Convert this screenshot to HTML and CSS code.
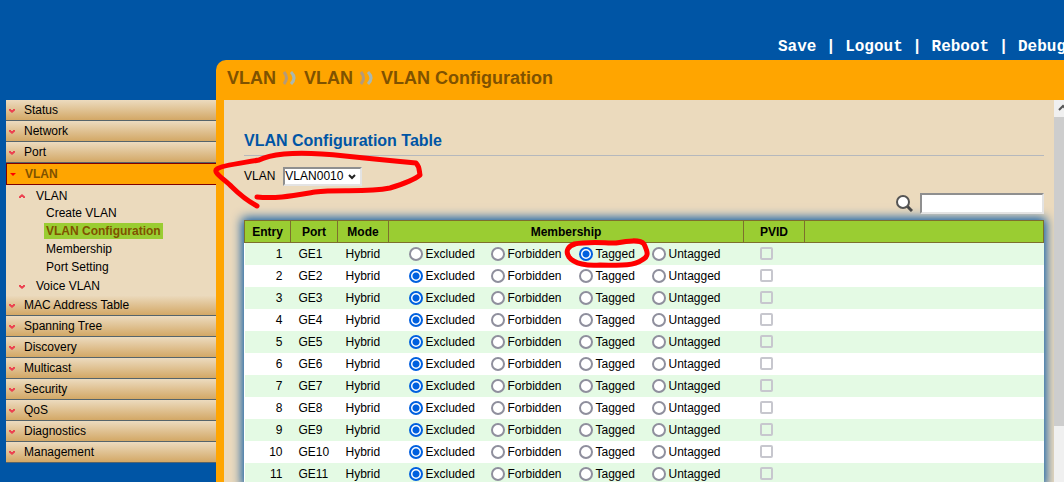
FILE: index.html
```html
<!DOCTYPE html>
<html lang="en">
<head>
    <meta charset="UTF-8">
    <meta name="viewport" content="width=device-width, initial-scale=1.0">
    <title>VLAN Configuration</title>
    <link rel="stylesheet" href="styles.css">
</head>
<body>
    <svg class="defs" aria-hidden="true">
        <symbol id="down" viewBox="0 0 6 5"><path d="M0 1h2v1h2V1h2v1.500L3 5 0 2.500z" fill="#ec4250"/></symbol>
        <symbol id="up" viewBox="0 0 6 5"><path d="M0 4h2V3h2v1h2V2.500L3 0 0 2.500z" fill="#ec4250"/></symbol>
        <symbol id="open" viewBox="0 0 6 5"><path d="M0 1h6L3 4z" fill="#ff0000"/></symbol>
        <symbol id="sep" viewBox="0 0 14 14">
            <path d="M1 1q5 6 0 12" fill="none" stroke="#b59a78" stroke-width="3"/>
            <path d="M8 1q6 6 0 12" fill="none" stroke="#a9b8b0" stroke-width="3"/>
        </symbol>
    </svg>

    <header class="header">
        <nav class="toplinks">
            <a href="#">Save</a> | <a href="#">Logout</a> | <a href="#">Reboot</a> | <a href="#">Debug</a>
        </nav>
    </header>

    <div class="page">
        <nav class="menu">
            <a class="item" href="#"><svg><use href="#down"/></svg>Status</a>
            <a class="item" href="#"><svg><use href="#down"/></svg>Network</a>
            <a class="item" href="#"><svg><use href="#down"/></svg>Port</a>
            <a class="item active" href="#"><svg><use href="#open"/></svg>VLAN</a>
            <div class="submenu">
                <a class="group" href="#"><svg><use href="#up"/></svg>VLAN</a>
                <a class="leaf" href="#">Create VLAN</a>
                <a class="leaf selected" href="#">VLAN Configuration</a>
                <a class="leaf" href="#">Membership</a>
                <a class="leaf" href="#">Port Setting</a>
                <a class="group" href="#"><svg><use href="#down"/></svg>Voice VLAN</a>
            </div>
            <a class="item" href="#"><svg><use href="#down"/></svg>MAC Address Table</a>
            <a class="item" href="#"><svg><use href="#down"/></svg>Spanning Tree</a>
            <a class="item" href="#"><svg><use href="#down"/></svg>Discovery</a>
            <a class="item" href="#"><svg><use href="#down"/></svg>Multicast</a>
            <a class="item" href="#"><svg><use href="#down"/></svg>Security</a>
            <a class="item" href="#"><svg><use href="#down"/></svg>QoS</a>
            <a class="item" href="#"><svg><use href="#down"/></svg>Diagnostics</a>
            <a class="item" href="#"><svg><use href="#down"/></svg>Management</a>
        </nav>

        <main class="main">
            <h1 class="crumbs">
                <span>VLAN</span><svg><use href="#sep"/></svg><span>VLAN</span><svg><use href="#sep"/></svg><span>VLAN Configuration</span>
            </h1>
            <div class="frame">
                <div class="content">
                    <h2 class="title">VLAN Configuration Table</h2>
                    <div class="vlan-row">
                        <label for="vlan">VLAN</label>
                        <div class="select">
                            <select id="vlan">
                                <option>VLAN0010</option>
                            </select>
                            <svg viewBox="0 0 8 6"><path d="M1 1l3 3 3-3" fill="none" stroke="#222" stroke-width="2"/></svg>
                        </div>
                    </div>
                    <div class="search-row">
                        <label for="search" aria-label="Search">
                            <svg viewBox="0 0 17 17">
                                <path d="M11 11l5 5" stroke="#484848" stroke-width="3"/>
                                <circle cx="7" cy="7" r="6" fill="#fff" stroke="#555" stroke-width="2"/>
                            </svg>
                        </label>
                        <input type="text" id="search">
                    </div>
                    <table class="ports">
                        <colgroup>
                            <col class="c-entry"><col class="c-port"><col class="c-mode"><col class="c-member"><col class="c-pvid"><col>
                        </colgroup>
                        <thead>
                            <tr><th>Entry</th><th>Port</th><th>Mode</th><th>Membership</th><th>PVID</th><th></th></tr>
                        </thead>
                        <tbody id="rows"></tbody>
                    </table>
                </div>
                <div class="scrollbar">
                    <div class="arrow"><svg viewBox="0 0 10 8"><path d="M1 6l4-4 4 4" fill="none" stroke="#555" stroke-width="2"/></svg></div>
                    <div class="thumb"></div>
                </div>
            </div>
        </main>
    </div>

    <!-- red pen marks -->
    <svg class="marks" viewBox="0 0 1064 482" aria-hidden="true">
        <path d="M257 206C246 200 239 194 232 187C224 179 212 172 217 169C222 165 243 163 259 160C267 156 275 155 284 154C305 152 327 154 345 156C373 159 394 161 416 163C420 167 419 171 420 175C414 180 403 184 390 188C365 193 339 189 315 192C291 196 275 199 257 197" />
        <path class="thick" d="M574 244C590 241 603 243 616 243C627 241 640 239 644 244C647 251 650 256 642 260C632 267 616 265 600 265C588 266 574 264 569 257C565 251 568 246 575 244z" />
    </svg>

    <script>
        var choices = ["Excluded", "Forbidden", "Tagged", "Untagged"];
        var rows = "";

        for (var i = 1; i <= 11; i++) {
            // GE1 is the tagged port, all others are excluded
            var current = i == 1 ? "Tagged" : "Excluded";
            var radios = choices.map(function (name) {
                var checked = name == current ? " checked" : "";
                return `<label><input type="radio" name="member${i}"${checked}>${name}</label>`;
            }).join("");
            rows += `<tr>
                <td class="entry">${i}</td><td>GE${i}</td><td>Hybrid</td>
                <td class="member"><div class="choices">${radios}</div></td>
                <td class="pvid"><input type="checkbox" aria-label="PVID GE${i}" disabled></td><td></td>
            </tr>`;
        }
        document.getElementById("rows").innerHTML = rows;
    </script>
</body>
</html>
```
FILE: styles.css
```css
* {
    box-sizing: border-box;
}

body {
    margin: 0;
    height: 100vh;
    display: flex;
    flex-direction: column;
    overflow: hidden;
    background-color: #0055a5;
    font-family: Arial, "Liberation Sans", sans-serif;
    font-size: 12px;
    color: #000;
}

a {
    color: inherit;
    text-decoration: none;
}

.defs {
    position: absolute;
    width: 0;
    height: 0;
}

.header {
    flex: none;
    height: 60px;
    display: flex;
    justify-content: flex-end;
    align-items: flex-end;
    overflow: hidden;
}

.toplinks {
    margin-right: -2px;
    padding-bottom: 3px;
    font: bold 16px/20px "Courier New", "Liberation Mono", monospace;
    color: #fff;
    white-space: nowrap;
}

.page {
    flex: 1;
    min-height: 0;
    display: flex;
}

/* left menu */
.menu {
    flex: none;
    width: 210px;
    margin: 40px 0 0 6px;
}

.menu svg {
    width: 6px;
    height: 5px;
}

.item {
    display: flex;
    align-items: center;
    gap: 9px;
    height: 21px;
    padding-left: 3px;
    border-bottom: 1px solid #55646b;
    background: linear-gradient(#ecdbbf, #d3a866);
}

.item.active {
    height: 22px;
    padding-left: 3px;
    border: 1px solid #800000;
    border-right: none;
    background: #ffa500;
    color: #7f5200;
    font-weight: bold;
}

.submenu {
    padding: 2px 0 0 12px;
    background-color: #ebdabd;
}

.group {
    display: flex;
    align-items: center;
    gap: 11px;
    height: 18px;
    padding-left: 1px;
}

.leaf {
    display: block;
    width: fit-content;
    margin: 0 0 2px 26px;
    padding: 0 2px;
    line-height: 16px;
}

.leaf.selected {
    background-color: #9acd32;
    color: #7f5200;
    font-weight: bold;
}

/* right side */
.main {
    flex: 1;
    min-width: 0;
    display: flex;
    flex-direction: column;
    padding-left: 8px;
    border-top-left-radius: 10px;
    background-color: #ffa500;
}

.crumbs {
    flex: none;
    display: flex;
    align-items: center;
    gap: 7px;
    height: 40px;
    margin: 0;
    padding: 0 0 4px 3px;
    font-size: 18px;
    color: #7f5200;
}

.crumbs svg {
    width: 14px;
    height: 14px;
}

.frame {
    flex: 1;
    min-height: 0;
    display: flex;
    background-color: #ebdabd;
}

.content {
    flex: 1;
    min-width: 0;
    padding: 30px 10px 0 20px;
    overflow: hidden;
}

.title {
    margin: 0;
    padding-bottom: 3px;
    border-bottom: 1px solid #b5b8bd;
    font-size: 16px;
    line-height: 22px;
    color: #0055a5;
}

.vlan-row {
    display: flex;
    align-items: center;
    gap: 8px;
    height: 37px;
    padding-top: 3px;
}

.select {
    position: relative;
}

.select select {
    appearance: none;
    display: block;
    width: 79px;
    height: 19px;
    padding: 0;
    border: 2px inset #e3e3e3;
    background-color: #fff;
    font: inherit;
}

.select svg {
    position: absolute;
    right: 6px;
    top: 7px;
    width: 8px;
    height: 6px;
    pointer-events: none;
}

.search-row {
    display: flex;
    justify-content: flex-end;
    align-items: center;
    gap: 7px;
    height: 21px;
    margin-bottom: 6px;
}

.search-row svg {
    display: block;
    width: 17px;
    height: 17px;
}

.search-row input {
    width: 124px;
    height: 21px;
    border: 2px inset #e3e3e3;
    background-color: #fff;
}

/* port table */
.ports {
    width: 100%;
    table-layout: fixed;
    border-collapse: collapse;
    background-color: #fff;
    box-shadow: 0 0 10px 2px #0055a5;
}

.c-entry {
    width: 46px;
}

.c-port {
    width: 47px;
}

.c-mode {
    width: 51px;
}

.c-member {
    width: 355px;
}

.c-pvid {
    width: 61px;
}

.ports th {
    height: 22px;
    padding: 0;
    border: 1px solid #7d6f2d;
    background-color: #9acd32;
}

.ports td {
    height: 22px;
    padding: 0 8px;
}

.ports tr:nth-child(odd) td {
    background-color: #e4fae4;
}

.ports .entry {
    text-align: right;
}

.ports .member {
    padding: 0 20px;
}

.choices {
    display: grid;
    grid-template-columns: 82px 88px 73px 1fr;
}

.choices label {
    display: flex;
    align-items: center;
    gap: 3px;
}

.choices input {
    appearance: none;
    width: 14px;
    height: 14px;
    margin: 0;
    border: 2px solid #8f8f9d;
    border-radius: 50%;
    background-color: #fff;
}

.choices input:checked {
    border-color: #0060df;
    background: radial-gradient(circle, #0060df 3px, #fff 4px);
}

.ports .pvid {
    padding: 0 16px;
}

.pvid input {
    appearance: none;
    display: block;
    width: 13px;
    height: 13px;
    margin: 0;
    border: 2px solid #c7c7ce;
    border-radius: 2px;
}

.scrollbar {
    flex: none;
    width: 10px;
    background-color: #f0f0f0;
    overflow: hidden;
}

.arrow {
    height: 17px;
    padding: 4px 0 0 4px;
}

.arrow svg {
    display: block;
    width: 10px;
    height: 8px;
}

.thumb {
    height: 81%;
    background-color: #cdcdcd;
}

.marks {
    position: absolute;
    left: 0;
    top: 0;
    width: 1064px;
    height: 482px;
    pointer-events: none;
    fill: none;
    stroke: #ff0000;
    stroke-width: 5;
    stroke-linecap: round;
    stroke-linejoin: round;
}
```
